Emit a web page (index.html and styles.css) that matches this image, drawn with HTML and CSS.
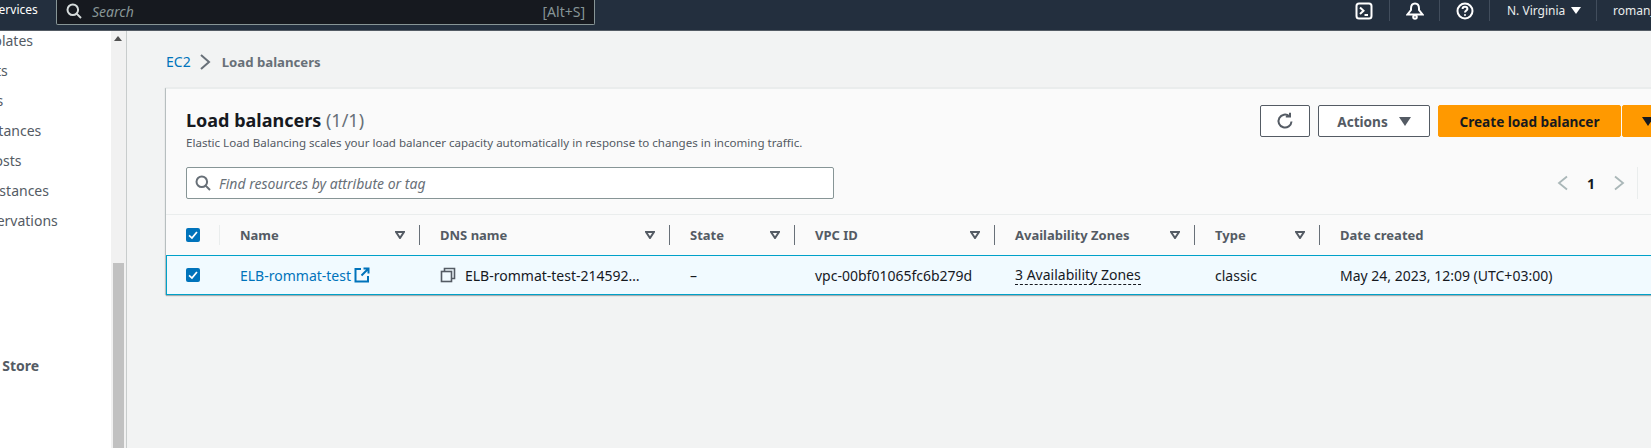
FILE: index.html
```html
<!DOCTYPE html>
<html>
<head>
    <meta charset="UTF-8">
    <title>Load balancers</title>
    <link rel="stylesheet" href="styles.css">
</head>
<body>
<div id="page">
    <header class="topbar">
        <span class="services">Services</span>
        <div class="global_search">
            <svg class="search_icon" width="16" height="16" viewBox="0 0 16 16"><circle cx="6.800" cy="6.800" r="5.300"/><path d="M10.600 10.600L15 15"/></svg>
            <span class="search_text">Search</span>
            <span class="search_key">[Alt+S]</span>
        </div>
        <div class="top_right">
            <span class="top_item icon_item">
                <svg width="18" height="18" viewBox="0 0 18 18"><rect x="1.500" y="1.500" width="15" height="15" rx="2.500"/><path d="M5 5.500L8.500 8.800 5 12M9.500 13H13"/></svg>
            </span>
            <span class="top_item icon_item">
                <svg width="18" height="18" viewBox="0 0 18 18"><path d="M9 1.500C6.200 1.500 5 3.800 5 6.500V8L1.500 12.500H16.500L13 8V6.500C13 3.800 11.800 1.500 9 1.500Z"/><circle cx="9" cy="15" r="1.800"/></svg>
            </span>
            <span class="top_item icon_item">
                <svg width="18" height="18" viewBox="0 0 18 18"><circle cx="9" cy="9" r="7.500"/><path d="M6.600 7C6.600 5.600 7.700 4.800 9 4.800 10.300 4.800 11.400 5.600 11.400 6.900 11.400 8.500 9 8.700 9 10.600"/><path d="M9 12.200V13.800"/></svg>
            </span>
            <span class="top_item region">N. Virginia <i class="caret_white"></i></span>
            <span class="top_item user">roman_rommat</span>
        </div>
    </header>

    <div class="below">
        <nav class="sidebar">
            <ul class="side_list">
                <li>Launch Templates</li>
                <li>Spot Requests</li>
                <li>Savings Plans</li>
                <li>Reserved Instances</li>
                <li>Dedicated Hosts</li>
                <li>Scheduled Instances</li>
                <li>Capacity Reservations</li>
            </ul>
            <div class="side_heading">Elastic Block Store</div>
        </nav>
        <div class="side_scroll">
            <i class="scroll_up"></i>
            <div class="scroll_thumb"></div>
        </div>

        <main class="main">
            <div class="breadcrumb">
                <a href="#" class="link">EC2</a>
                <svg class="crumb_sep" width="12" height="16" viewBox="0 0 12 16"><path d="M2 1L10 8 2 15"/></svg>
                <span class="crumb_now">Load balancers</span>
            </div>

            <section class="card">
                <div class="card_head">
                    <div class="head_top">
                        <div class="head_title">
                            <h1>Load balancers <span class="count">(1/1)</span></h1>
                            <p>Elastic Load Balancing scales your load balancer capacity automatically in response to changes in incoming traffic.</p>
                        </div>
                        <div class="head_btns">
                            <button class="btn btn_icon">
                                <svg width="18" height="18" viewBox="0 0 18 18"><path d="M15.500 9.500A6.500 6.500 0 1 1 13.300 4.200"/><path d="M9.800 4.500H14V0.800"/></svg>
                            </button>
                            <button class="btn btn_actions">Actions <i class="caret_grey"></i></button>
                            <button class="btn btn_primary">Create load balancer</button>
                            <button class="btn btn_primary btn_split"><i class="caret_black"></i></button>
                        </div>
                    </div>
                    <div class="head_filter">
                        <div class="filter_box">
                            <svg width="16" height="16" viewBox="0 0 16 16"><circle cx="6.800" cy="6.800" r="5.300"/><path d="M10.600 10.600L15 15"/></svg>
                            <span>Find resources by attribute or tag</span>
                        </div>
                        <div class="pager">
                            <svg width="12" height="16" viewBox="0 0 12 16"><path d="M10 1.500L2 8 10 14.500"/></svg>
                            <b>1</b>
                            <svg width="12" height="16" viewBox="0 0 12 16"><path d="M2 1.500L10 8 2 14.500"/></svg>
                            <i class="pager_sep"></i>
                        </div>
                    </div>
                </div>

                <div class="grid_row head_row">
                    <div class="check_cell"><span class="checkbox"><svg width="16" height="16" viewBox="0 0 16 16"><path d="M3.500 8.500L6.800 11.500 12.500 4.500"/></svg></span></div>
                    <div class="th first_th"><span>Name</span><svg class="sort" width="10" height="8" viewBox="0 0 10 8"><path d="M1 1H9L5 7Z"/></svg></div>
                    <div class="th"><span>DNS name</span><svg class="sort" width="10" height="8" viewBox="0 0 10 8"><path d="M1 1H9L5 7Z"/></svg></div>
                    <div class="th"><span>State</span><svg class="sort" width="10" height="8" viewBox="0 0 10 8"><path d="M1 1H9L5 7Z"/></svg></div>
                    <div class="th"><span>VPC ID</span><svg class="sort" width="10" height="8" viewBox="0 0 10 8"><path d="M1 1H9L5 7Z"/></svg></div>
                    <div class="th"><span>Availability Zones</span><svg class="sort" width="10" height="8" viewBox="0 0 10 8"><path d="M1 1H9L5 7Z"/></svg></div>
                    <div class="th"><span>Type</span><svg class="sort" width="10" height="8" viewBox="0 0 10 8"><path d="M1 1H9L5 7Z"/></svg></div>
                    <div class="th"><span>Date created</span></div>
                </div>

                <div class="grid_row body_row">
                    <div class="check_cell"><span class="checkbox"><svg width="16" height="16" viewBox="0 0 16 16"><path d="M3.500 8.500L6.800 11.500 12.500 4.500"/></svg></span></div>
                    <div class="td"><a href="#" class="link">ELB-rommat-test</a>
                        <svg class="ext_icon" width="16" height="16" viewBox="0 0 16 16"><path d="M7 2H1.500V14.500H14V9"/><path d="M9.500 1.500H14.500V6.500M14.500 1.500L7.500 8.500"/></svg>
                    </div>
                    <div class="td">
                        <svg class="copy_icon" width="16" height="16" viewBox="0 0 16 16"><rect x="1.500" y="4.500" width="10" height="10"/><path d="M4.500 4.500V1.500H14.500V11.500H11.500"/></svg>
                        <span>ELB-rommat-test-214592…</span>
                    </div>
                    <div class="td">–</div>
                    <div class="td">vpc-00bf01065fc6b279d</div>
                    <div class="td"><span class="dotted">3 Availability Zones</span></div>
                    <div class="td">classic</div>
                    <div class="td">May 24, 2023, 12:09 (UTC+03:00)</div>
                </div>
            </section>
        </main>
    </div>
</div>
</body>
</html>
```

FILE: styles.css
```css
* {
    box-sizing: border-box;
}

html, body {
    margin: 0;
    padding: 0;
}

body {
    font-family: "Noto Sans", "Liberation Sans", sans-serif;
    font-size: 14px;
    color: #16191f;
    background-color: #f2f3f3;
}

#page {
    width: 1651px;
    height: 448px;
    overflow: hidden;
}

.link {
    color: #0073bb;
    text-decoration: none;
}

/* top bar */
.topbar {
    display: flex;
    align-items: flex-start;
    height: 31px;
    background-color: #232f3e;
    border-bottom: 1px solid #545b64;
    color: #eaeded;
}

.services {
    width: 48px;
    flex: none;
    margin-left: -8px;
    padding-top: 1px;
    font-size: 12px;
    line-height: 18px;
    color: #fff;
    white-space: nowrap;
}

.global_search {
    display: flex;
    align-items: center;
    width: 539px;
    height: 25px;
    margin-left: 16px;
    padding: 0 9px 2px 9px;
    background-color: #16191f;
    border: 1px solid #879596;
    border-top: 0;
    border-radius: 0 0 2px 2px;
}

.search_icon {
    fill: none;
    stroke: #d5dbdb;
    stroke-width: 2;
}

.search_text {
    margin-left: 10px;
    font-size: 14px;
    font-style: italic;
    color: #879596;
}

.search_key {
    margin-left: auto;
    font-size: 14px;
    color: #879596;
}

.top_right {
    display: flex;
    margin-left: auto;
    width: 312px;
    flex: none;
    height: 21px;
    white-space: nowrap;
}

.top_item {
    display: flex;
    align-items: center;
    height: 21px;
    flex: none;
    border-left: 1px solid #414d5c;
    font-size: 12px;
}

.top_item:first-child {
    border-left: 0;
}

.icon_item {
    justify-content: center;
    width: 50px;
}

.icon_item svg {
    fill: none;
    stroke: #fff;
    stroke-width: 2;
}

.region {
    width: 107px;
    padding-left: 17px;
    gap: 6px;
}

.user {
    padding-left: 16px;
}

.caret_white {
    width: 0;
    height: 0;
    border-top: 7px solid #fff;
    border-left: 5px solid transparent;
    border-right: 5px solid transparent;
}

/* below the bar */
.below {
    display: flex;
    height: 417px;
}

.sidebar {
    width: 111px;
    flex: none;
    overflow: hidden;
    background-color: #fff;
    color: #545b64;
    font-size: 14px;
}

.side_list {
    list-style: none;
    margin: 0 0 0 -86px;
    padding: 0;
    white-space: nowrap;
}

.side_list li {
    height: 30px;
    line-height: 20px;
}

.side_heading {
    margin: 115px 0 0 -88px;
    font-weight: bold;
    white-space: nowrap;
}

.side_scroll {
    position: relative;
    width: 16px;
    flex: none;
    padding: 232px 2px 0;
    background-color: #f1f1f1;
    border-right: 1px solid #c8cccc;
}

.scroll_up {
    position: absolute;
    top: 5px;
    left: 3px;
    width: 0;
    height: 0;
    border-bottom: 5px solid #505050;
    border-left: 4px solid transparent;
    border-right: 4px solid transparent;
}

.scroll_thumb {
    height: 185px;
    background-color: #c1c1c1;
}

.main {
    width: 1570px;
    flex: none;
    padding-left: 39px;
}

.breadcrumb {
    display: flex;
    align-items: center;
    height: 57px;
    padding-top: 4px;
    font-size: 14px;
}

.crumb_sep {
    margin: 0 11px 0 8px;
    fill: none;
    stroke: #687078;
    stroke-width: 2;
}

.crumb_now {
    font-weight: bold;
    color: #687078;
    font-size: 13.2px;
}

/* card */
.card {
    width: 1528px;
    background-color: #fff;
    box-shadow: 0 1px 1px 0 rgba(0, 28, 36, .3), -1px 0 1px 0 rgba(0, 28, 36, .2);
    border-top: 1px solid #eaeded;
}

.card_head {
    height: 126px;
    padding: 16px 20px 0;
    background-color: #fafafa;
    border-bottom: 1px solid #eaeded;
}

.head_top {
    display: flex;
    justify-content: space-between;
    height: 62px;
}

.head_title h1 {
    margin: 4px 0 0;
    font-size: 18px;
    line-height: 22px;
    font-weight: bold;
}

.count {
    font-weight: normal;
    color: #687078;
}

.head_title p {
    margin: 4px 0 0;
    font-size: 11.55px;
    line-height: 16px;
    color: #545b64;
}

.head_btns {
    display: flex;
}

.btn {
    display: flex;
    align-items: center;
    justify-content: center;
    height: 32px;
    padding: 0;
    font-family: inherit;
    font-size: 13.6px;
    font-weight: bold;
    background-color: #fff;
    border: 1px solid #545b64;
    border-radius: 2px;
    color: #545b64;
}

.btn_icon {
    width: 50px;
    margin-right: 8px;
}

.btn_icon svg {
    fill: none;
    stroke: #545b64;
    stroke-width: 2;
}

.btn_actions {
    width: 112px;
    margin-right: 8px;
    gap: 11px;
}

.caret_grey {
    width: 0;
    height: 0;
    border-top: 9px solid #545b64;
    border-left: 6px solid transparent;
    border-right: 6px solid transparent;
}

.btn_primary {
    width: 183px;
    background-color: #ff9900;
    border-color: #ff9900;
    color: #16191f;
}

.btn_split {
    width: 52px;
    margin-left: 1px;
}

.caret_black {
    width: 0;
    height: 0;
    border-top: 9px solid #16191f;
    border-left: 6px solid transparent;
    border-right: 6px solid transparent;
}

.head_filter {
    display: flex;
    justify-content: space-between;
    align-items: center;
}

.filter_box {
    display: flex;
    align-items: center;
    width: 648px;
    height: 32px;
    padding-left: 8px;
    background-color: #fff;
    border: 1px solid #879596;
    border-radius: 2px;
    font-size: 14px;
    font-style: italic;
    color: #687078;
}

.filter_box svg {
    margin-right: 8px;
    fill: none;
    stroke: #687078;
    stroke-width: 2;
}

.pager {
    display: flex;
    align-items: center;
    gap: 18px;
    height: 32px;
    margin-right: 36px;
    font-size: 14px;
}

.pager svg {
    fill: none;
    stroke: #aab7b8;
    stroke-width: 1.8;
}

.pager_sep {
    width: 1px;
    height: 32px;
    margin-left: -6px;
    background-color: #eaeded;
}

/* table */
.grid_row {
    display: grid;
    grid-template-columns: 53px 200px 250px 125px 200px 200px 125px 375px;
    height: 40px;
    align-items: center;
}

.head_row {
    background-color: #fafafa;
    font-size: 13px;
    font-weight: bold;
    color: #545b64;
}

.check_cell {
    padding-left: 20px;
}

.checkbox {
    display: block;
    width: 14px;
    height: 14px;
    background-color: #0073bb;
    border-radius: 2px;
}

.checkbox svg {
    display: block;
    width: 14px;
    height: 14px;
    fill: none;
    stroke: #fff;
    stroke-width: 2;
}

.th {
    display: flex;
    align-items: center;
    justify-content: space-between;
    height: 20px;
    padding: 0 14px 0 20px;
    border-left: 1px solid #687078;
}

.first_th {
    border-left-color: #eaeded;
}

.sort {
    fill: none;
    stroke: #545b64;
    stroke-width: 2;
}

.body_row {
    background-color: #f1faff;
    box-shadow: inset 0 0 0 1px #00a1c9;
    font-size: 14px;
}

.td {
    display: flex;
    align-items: center;
    padding-left: 21px;
    white-space: nowrap;
}

.ext_icon {
    margin-left: 3px;
    fill: none;
    stroke: #0073bb;
    stroke-width: 2;
}

.copy_icon {
    margin-right: 9px;
    fill: none;
    stroke: #545b64;
    stroke-width: 1.6;
}

.dotted {
    border-bottom: 1px dashed #16191f;
}
```
